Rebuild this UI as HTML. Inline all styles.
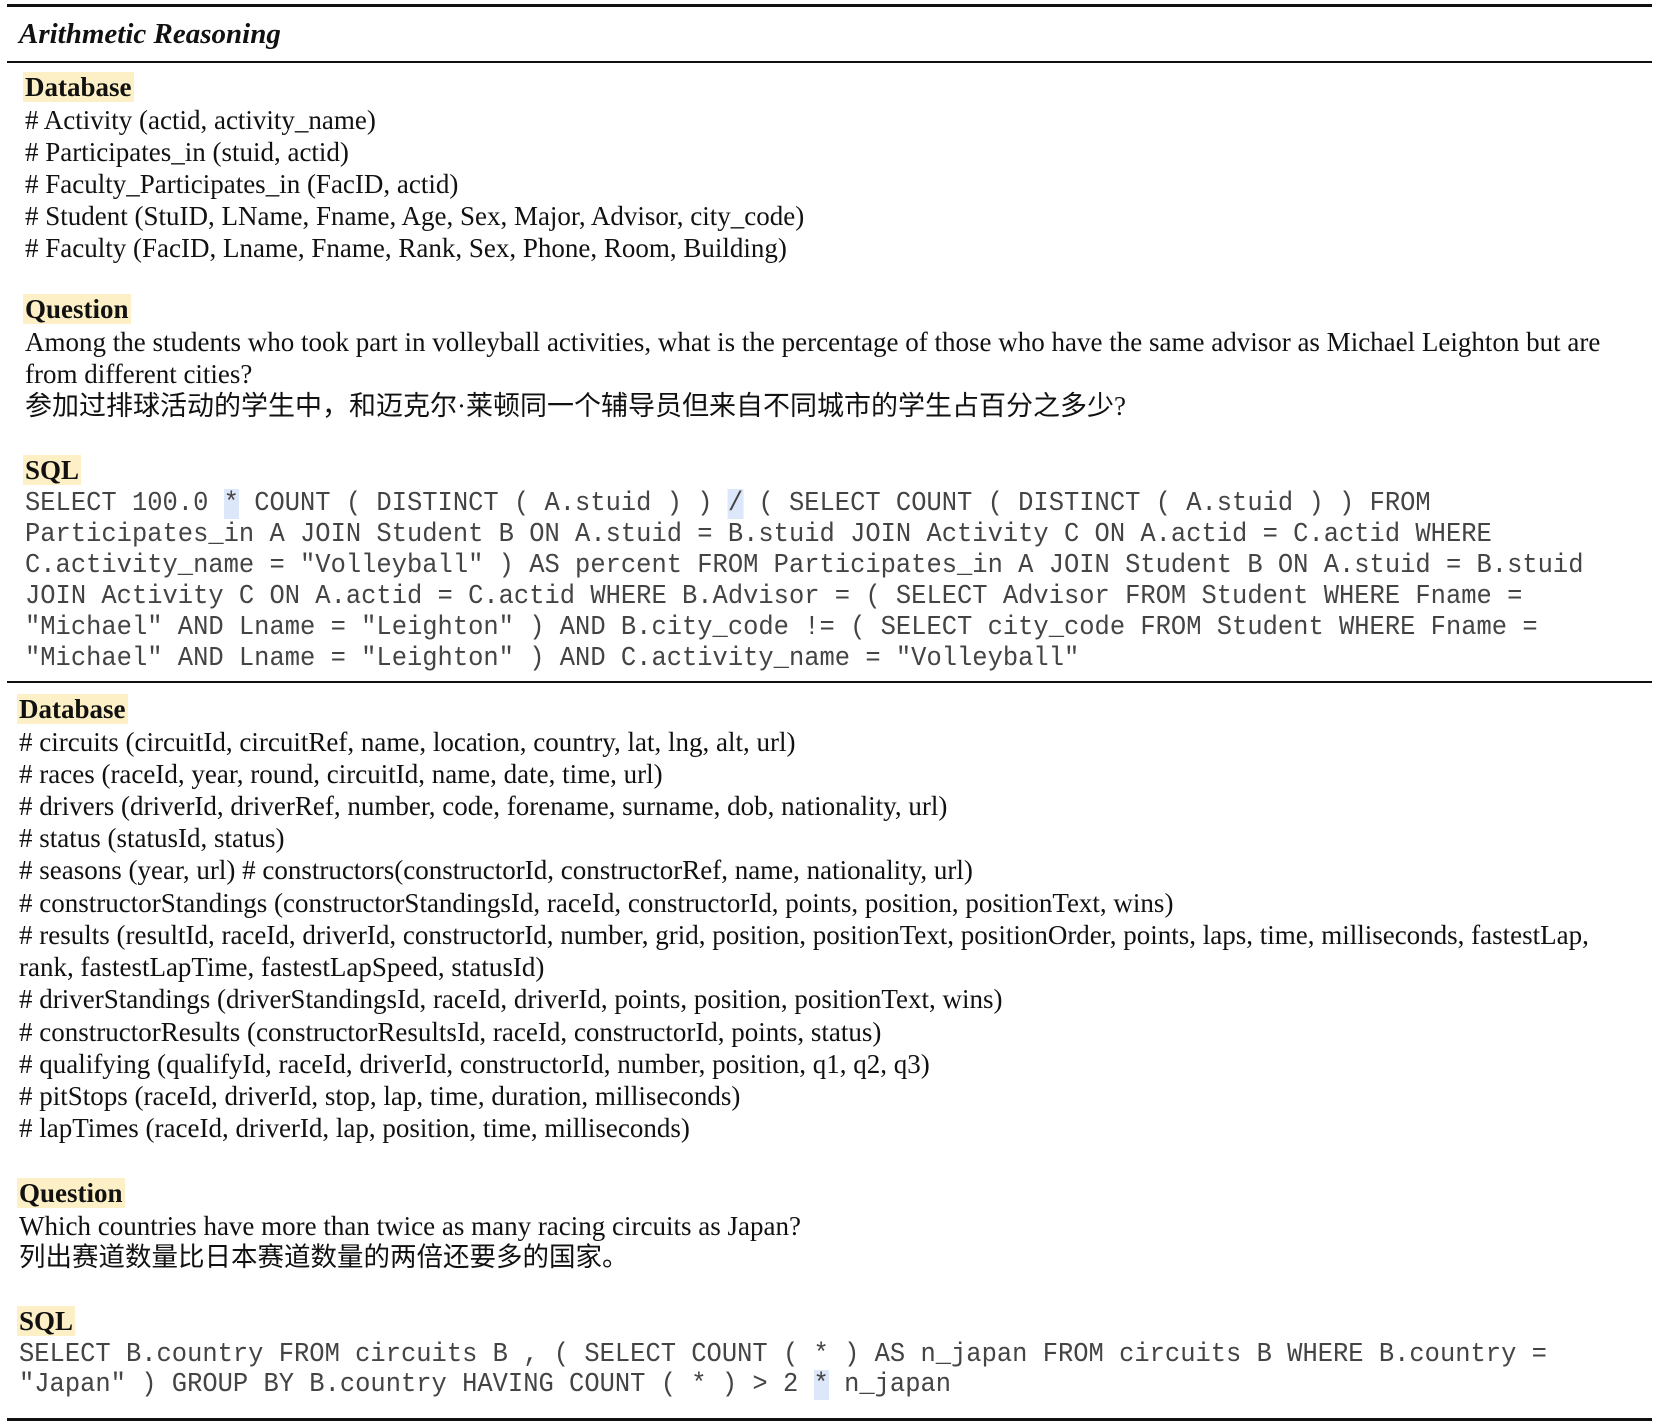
<!DOCTYPE html>
<html><head><meta charset="utf-8"><style>
html,body{margin:0;padding:0;background:#fff;}
body{width:1661px;height:1425px;position:relative;overflow:hidden;}
.r{position:absolute;left:7px;width:1645px;background:#111;}
.l{position:absolute;white-space:pre;font-family:"Liberation Serif","Noto Serif CJK SC",serif;font-size:27px;line-height:32px;color:#111;}
.lab{font-weight:bold;background:#fdf0c6;padding:0 2px;margin-left:-2px;}
.c{position:absolute;white-space:pre;font-family:"Liberation Mono",monospace;font-size:27px;line-height:31px;color:#444;transform:scaleX(0.943);transform-origin:0 50%;}
.zh{position:absolute;white-space:pre;font-family:"Liberation Serif","Noto Sans CJK SC",sans-serif;font-size:27px;line-height:32px;color:#111;}
.h{background:#dde7fa;}
</style></head><body>
<div class="r" style="top:4px;height:3px"></div>
<div class="l" style="left:19px;top:18px;font-style:italic;font-weight:bold;font-size:29px;">Arithmetic Reasoning</div>
<div class="r" style="top:61px;height:2px"></div>

<div class="l" style="left:25px;top:71px"><span class="lab">Database</span></div>
<div class="l" style="left:25px;top:104px"># Activity (actid, activity_name)</div>
<div class="l" style="left:25px;top:136px"># Participates_in (stuid, actid)</div>
<div class="l" style="left:25px;top:168px"># Faculty_Participates_in (FacID, actid)</div>
<div class="l" style="left:25px;top:200px"># Student (StuID, LName, Fname, Age, Sex, Major, Advisor, city_code)</div>
<div class="l" style="left:25px;top:232px"># Faculty (FacID, Lname, Fname, Rank, Sex, Phone, Room, Building)</div>

<div class="l" style="left:25px;top:293px"><span class="lab">Question</span></div>
<div class="l" style="left:25px;top:326px">Among the students who took part in volleyball activities, what is the percentage of those who have the same advisor as Michael Leighton but are</div>
<div class="l" style="left:25px;top:358px">from different cities?</div>
<div class="zh" style="left:25px;top:390px">参加过排球活动的学生中，和迈克尔·莱顿同一个辅导员但来自不同城市的学生占百分之多少?</div>

<div class="l" style="left:25px;top:454px"><span class="lab">SQL</span></div>
<div class="c" style="left:25px;top:489px">SELECT 100.0 <span class="h">*</span> COUNT ( DISTINCT ( A.stuid ) ) <span class="h">/</span> ( SELECT COUNT ( DISTINCT ( A.stuid ) ) FROM</div>
<div class="c" style="left:25px;top:520px">Participates_in A JOIN Student B ON A.stuid = B.stuid JOIN Activity C ON A.actid = C.actid WHERE</div>
<div class="c" style="left:25px;top:551px">C.activity_name = "Volleyball" ) AS percent FROM Participates_in A JOIN Student B ON A.stuid = B.stuid</div>
<div class="c" style="left:25px;top:582px">JOIN Activity C ON A.actid = C.actid WHERE B.Advisor = ( SELECT Advisor FROM Student WHERE Fname =</div>
<div class="c" style="left:25px;top:613px">"Michael" AND Lname = "Leighton" ) AND B.city_code != ( SELECT city_code FROM Student WHERE Fname =</div>
<div class="c" style="left:25px;top:644px">"Michael" AND Lname = "Leighton" ) AND C.activity_name = "Volleyball"</div>

<div class="r" style="top:681px;height:2px"></div>

<div class="l" style="left:19px;top:693px"><span class="lab">Database</span></div>
<div class="l" style="left:19px;top:726px"># circuits (circuitId, circuitRef, name, location, country, lat, lng, alt, url)</div>
<div class="l" style="left:19px;top:758px"># races (raceId, year, round, circuitId, name, date, time, url)</div>
<div class="l" style="left:19px;top:790px"># drivers (driverId, driverRef, number, code, forename, surname, dob, nationality, url)</div>
<div class="l" style="left:19px;top:822px"># status (statusId, status)</div>
<div class="l" style="left:19px;top:854px"># seasons (year, url) # constructors(constructorId, constructorRef, name, nationality, url)</div>
<div class="l" style="left:19px;top:887px"># constructorStandings (constructorStandingsId, raceId, constructorId, points, position, positionText, wins)</div>
<div class="l" style="left:19px;top:919px"># results (resultId, raceId, driverId, constructorId, number, grid, position, positionText, positionOrder, points, laps, time, milliseconds, fastestLap,</div>
<div class="l" style="left:19px;top:951px">rank, fastestLapTime, fastestLapSpeed, statusId)</div>
<div class="l" style="left:19px;top:983px"># driverStandings (driverStandingsId, raceId, driverId, points, position, positionText, wins)</div>
<div class="l" style="left:19px;top:1016px"># constructorResults (constructorResultsId, raceId, constructorId, points, status)</div>
<div class="l" style="left:19px;top:1048px"># qualifying (qualifyId, raceId, driverId, constructorId, number, position, q1, q2, q3)</div>
<div class="l" style="left:19px;top:1080px"># pitStops (raceId, driverId, stop, lap, time, duration, milliseconds)</div>
<div class="l" style="left:19px;top:1112px"># lapTimes (raceId, driverId, lap, position, time, milliseconds)</div>

<div class="l" style="left:19px;top:1177px"><span class="lab">Question</span></div>
<div class="l" style="left:19px;top:1210px">Which countries have more than twice as many racing circuits as Japan?</div>
<div class="zh" style="left:19px;top:1241px;font-size:26.5px">列出赛道数量比日本赛道数量的两倍还要多的国家。</div>

<div class="l" style="left:19px;top:1305px"><span class="lab">SQL</span></div>
<div class="c" style="left:19px;top:1340px">SELECT B.country FROM circuits B , ( SELECT COUNT ( * ) AS n_japan FROM circuits B WHERE B.country =</div>
<div class="c" style="left:19px;top:1370px">"Japan" ) GROUP BY B.country HAVING COUNT ( * ) &gt; 2 <span class="h">*</span> n_japan</div>

<div class="r" style="top:1418px;height:3px"></div>
</body></html>
